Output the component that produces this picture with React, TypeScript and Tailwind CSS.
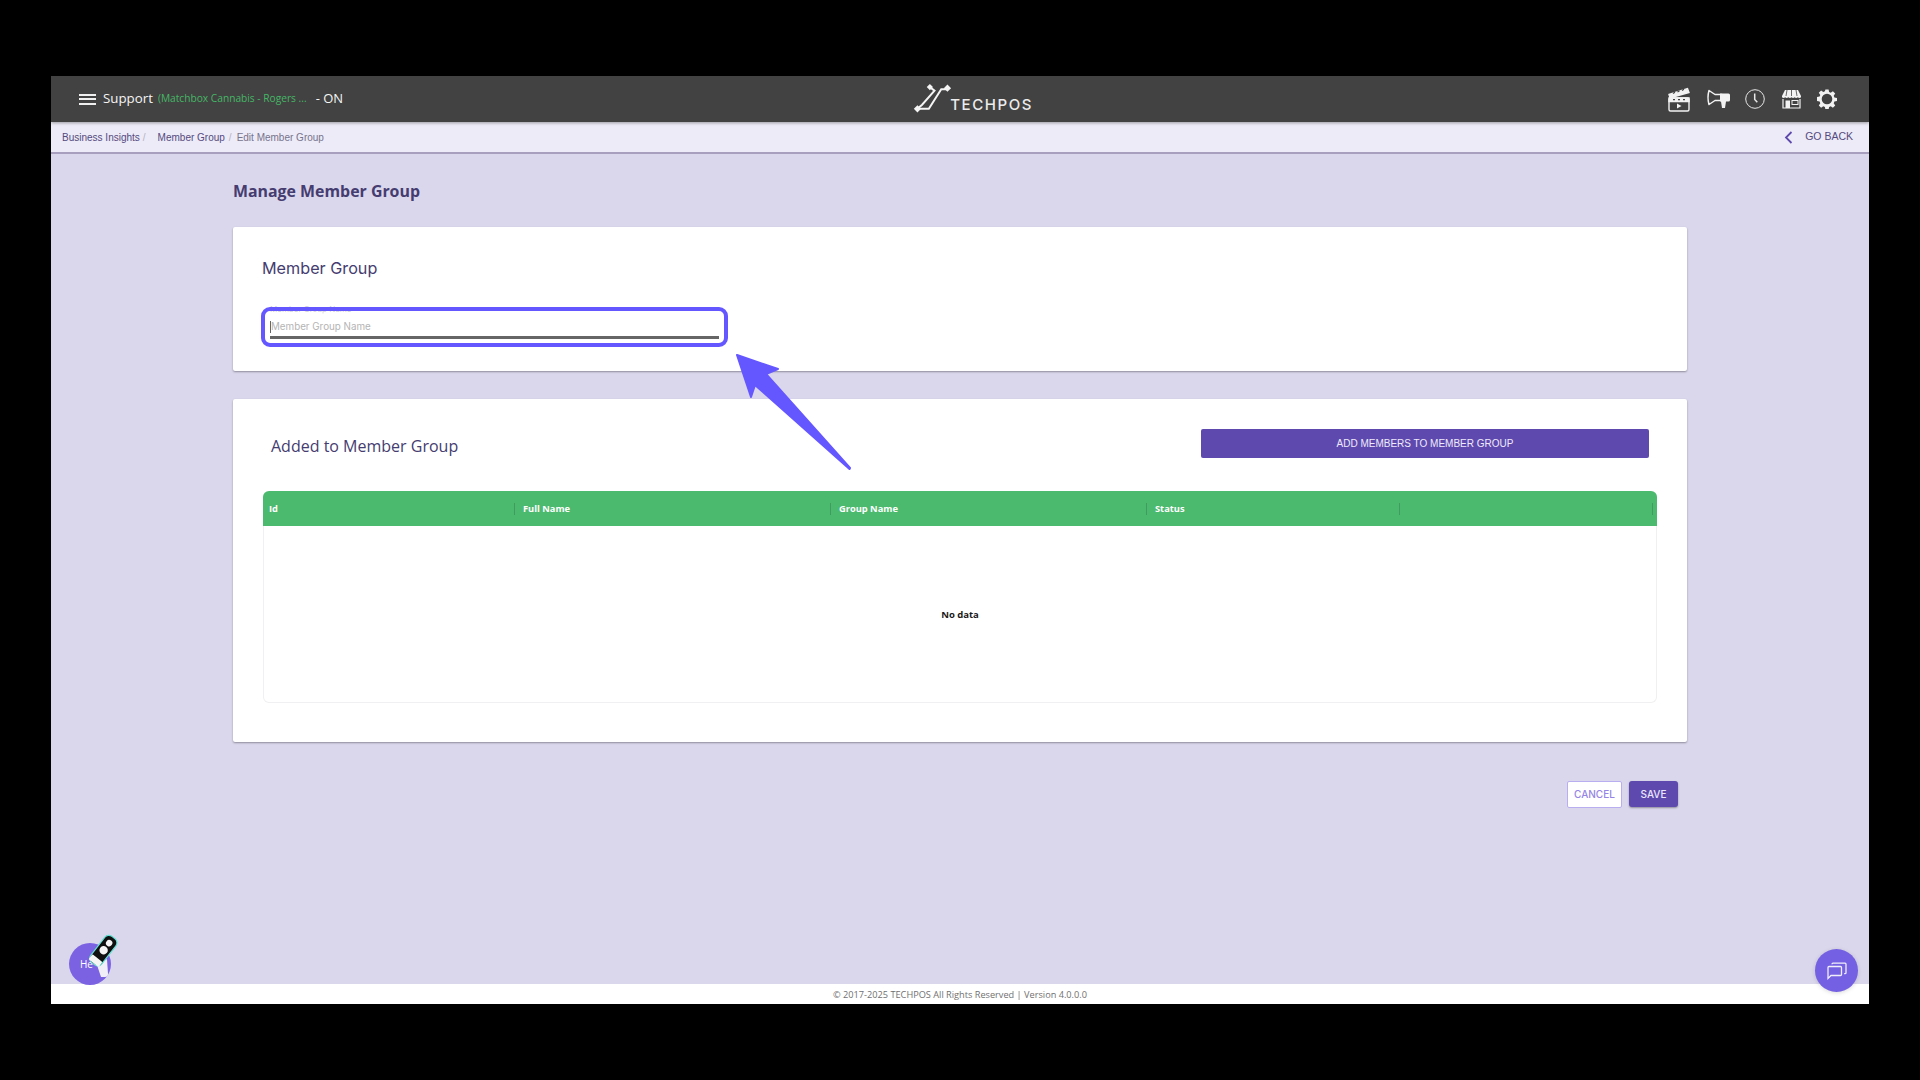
import React from "react";

const Clapper = () => (
  <svg width="24" height="26" viewBox="0 0 24 26" fill="none" stroke="#f2f2f2" strokeWidth="1.4">
    <rect x="2" y="12" width="20" height="13" rx="1.5" />
    <path d="M2 8.5 20.5 2.5 22 6.5 3 12Z" fill="#f2f2f2" />
    <path d="M2 12h20v3.5H2Z" fill="#f2f2f2" />
    <path d="M6 7.5l2-1.2M10.5 6l2-1.2M15 4.5l2-1.2M6 13.7h2M11 13.7h2M16 13.7h2" stroke="#424242" strokeWidth="1.2" />
    <path d="M10 17.5v5l4.5-2.5Z" fill="#f2f2f2" stroke="none" />
  </svg>
);

const Horn = () => (
  <svg width="25" height="20" viewBox="0 0 25 20" fill="none">
    <path d="M3 1.5 9 5.5 H16 V11.5 H9 L3 15.5 Q1 8.5 3 1.5Z" stroke="#f2f2f2" strokeWidth="1.5" strokeLinejoin="round" />
    <path d="M14 4.5h8.5q1.5 0 1.5 1.5V11q0 1.5-1.5 1.5H20l-1 6.5h-3l-1-6.5h-1Z" fill="#f2f2f2" />
  </svg>
);

const ClockIcon = () => (
  <svg width="20" height="20" viewBox="0 0 20 20" fill="none" stroke="#e8e8e8" strokeWidth="1">
    <circle cx="10" cy="10" r="9.3" />
    <path d="M9.7 4.5v6l2.6 2.8" strokeWidth="1.5" />
  </svg>
);

const StoreIcon = () => (
  <svg width="19" height="20" viewBox="0 0 19 20" fill="none">
    <path d="M3 1h13l3 6H0Z" fill="#f2f2f2" />
    <path d="M0 7h19v1.2q-1.6 1.6-3.2 0-1.6 1.6-3.2 0-1.5 1.6-3.1 0-1.6 1.6-3.2 0-1.6 1.6-3.1 0-1.6 1.6-3.2 0Z" fill="#f2f2f2" />
    <path d="M5 1 4 7M9.5 1v6M14 1l1 6" stroke="#424242" strokeWidth=".8" />
    <path d="M1 10v9h17v-9" stroke="#f2f2f2" strokeWidth="1.2" />
    <path d="M3.5 11.5h4.5V19H3.5Z" fill="#f2f2f2" />
    <rect x="10" y="11.5" width="6" height="4" stroke="#f2f2f2" strokeWidth="1" />
  </svg>
);

const GearIcon = () => (
  <svg width="20" height="20" viewBox="0 0 20 20">
    <path
      fill="#f2f2f2"
      fillRule="evenodd"
      d="M8.4.5h3.2l.5 2.6 1.6.7 2.2-1.5 2.3 2.3-1.5 2.2.7 1.6 2.6.5v3.2l-2.6.5-.7 1.6 1.5 2.2-2.3 2.3-2.2-1.5-1.6.7-.5 2.6H8.4l-.5-2.6-1.6-.7-2.2 1.5-2.3-2.3 1.5-2.2-.7-1.6-2.6-.5V8.1l2.6-.5.7-1.6-1.5-2.2 2.3-2.3 2.2 1.5 1.6-.7ZM10 4.7a5.3 5.3 0 1 0 0 10.6 5.3 5.3 0 0 0 0-10.6Z"
    />
  </svg>
);

const LogoMark = () => (
  <svg width="42" height="30" viewBox="0 0 40 29" fill="none" stroke="#f5f5f5" strokeWidth="1.9">
    <path d="M4 24H15L27 5H33" />
    <path d="M16 3l4.5 3.5L8.5 20 4 24" />
    <path d="M4 20.5 7.5 24 4 27.5.5 24Z" fill="#f5f5f5" stroke="none" />
    <path d="M33 .5 36.5 4 33 7.5 29.5 4Z" fill="#f5f5f5" stroke="none" />
    <path d="M16 0l3 3-3 3-3-3Z" fill="#f5f5f5" stroke="none" />
  </svg>
);

const HeadCell = ({ label, className, sep = true }: { label: string; className: string; sep?: boolean }) => (
  <div className={`flex items-center justify-between ${className}`}>
    <span className="font-['Open_Sans',sans-serif] text-[9.3px] font-bold text-white">{label}</span>
    {sep && <span className="h-[12px] w-px bg-[#3f9c5e]" />}
  </div>
);

export default function App() {
  return (
    <div className="h-screen w-screen overflow-hidden bg-black pl-[51px] pt-[76px]">
      <div className="relative flex h-[928px] w-[1818px] flex-col bg-white">
        {/* top bar */}
        <header className="z-10 flex h-[46px] shrink-0 items-center bg-[#424242] pl-[28px] pr-[32px] shadow-[0_1px_3px_rgba(0,0,0,0.35)]">
          <div className="flex flex-col gap-[2.5px]">
            <span className="h-[2px] w-[17px] bg-[#efefef]" />
            <span className="h-[2px] w-[17px] bg-[#efefef]" />
            <span className="h-[2px] w-[17px] bg-[#efefef]" />
          </div>
          <span className="ml-[7px] font-['Open_Sans',sans-serif] text-[13.3px] font-medium text-[#f5f5f5]">Support</span>
          <span className="ml-[5px] font-['Open_Sans',sans-serif] text-[10.2px] text-[#45b665]">(Matchbox Cannabis - Rogers ...</span>
          <span className="ml-[9px] font-['Open_Sans',sans-serif] text-[13px] text-[#f5f5f5]">- ON</span>
          <div className="ml-[570px] flex items-end">
            <LogoMark />
            <span className="-ml-[5px] font-['Inter',sans-serif] text-[15px] font-medium leading-[18px] tracking-[1.6px] text-[#ececec]">TECHPOS</span>
          </div>
          <div className="ml-auto flex items-center">
            <Clapper />
            <span className="ml-[15px]"><Horn /></span>
            <span className="ml-[14px]"><ClockIcon /></span>
            <span className="ml-[17px]"><StoreIcon /></span>
            <span className="ml-[16px]"><GearIcon /></span>
          </div>
        </header>

        {/* breadcrumb */}
        <div className="flex h-[32px] shrink-0 items-center border-b-2 border-[#a89fbf] bg-[#edebf7] pl-[11px] pr-[16px] font-['Liberation_Sans',sans-serif] text-[10px]">
          <span className="text-[#544a80]">Business Insights</span>
          <span className="ml-[3px] text-[#b5b3c4]">/</span>
          <span className="ml-[12px] text-[#544a80]">Member Group</span>
          <span className="ml-[4px] text-[#b5b3c4]">/</span>
          <span className="ml-[5px] text-[#77738c]">Edit Member Group</span>
          <div className="ml-auto flex items-center">
            <svg width="9" height="13" viewBox="0 0 9 13" fill="none" stroke="#5e49ae" strokeWidth="1.8">
              <path d="M7.5 1 2 6.5 7.5 12" />
            </svg>
            <span className="ml-[12px] text-[10.5px] text-[#544a80]">GO BACK</span>
          </div>
        </div>

        {/* main */}
        <main className="flex flex-1 flex-col bg-[#dad7ec] px-[182px]">
          <h1 className="mt-[25px] font-['Open_Sans',sans-serif] text-[15.9px] font-bold leading-[24px] text-[#453c70]">Manage Member Group</h1>

          <section className="mt-[24px] h-[144px] rounded-[2px] bg-white px-[29px] pt-[29px] shadow-[0_1px_2px_rgba(0,0,0,0.35)]">
            <h2 className="font-['Inter',sans-serif] text-[16.2px] leading-[24px] text-[#453c70]">Member Group</h2>
            <div className="relative ml-[8px] mt-[25px] h-[34px] w-[449px]">
              <div className="h-[9px] overflow-hidden font-['Inter',sans-serif] text-[8px] leading-[8px] text-[#cfcfd8]">Member Group Name</div>
              <div className="mt-[7px] border-l border-[#666] font-['Inter',sans-serif] text-[9.8px] leading-[12px] text-[#b4b4b4]">Member Group Name</div>
              <div className="mt-[3px] h-[2.5px] bg-[#666]" />
              <div className="absolute -left-[9px] -right-[9px] top-[2px] h-[40px] rounded-[9px] border-[4.5px] border-[#6557ff]" />
            </div>
          </section>

          <section className="mt-[28px] flex h-[343px] flex-col rounded-[2px] bg-white px-[30px] pt-[30px] shadow-[0_1px_2px_rgba(0,0,0,0.35)]">
            <div className="flex h-[29px] items-center justify-between px-[8px]">
              <h2 className="mt-[5px] font-['Open_Sans',sans-serif] text-[16px] text-[#453c70]">Added to Member Group</h2>
              <button className="flex h-[29px] w-[448px] items-center justify-center rounded-[2px] bg-[#5e49ae] font-['Liberation_Sans',sans-serif] text-[10px] text-[#efeafa]">
                ADD MEMBERS TO MEMBER GROUP
              </button>
            </div>
            <div className="mt-[33px] flex h-[212px] flex-col rounded-[6px] border border-t-0 border-[#f0f0f2]">
              <div className="-mx-px flex h-[35px] shrink-0 rounded-t-[6px] bg-[#4bb96e]">
                <HeadCell label="Id" className="w-[252px] pl-[6px]" />
                <HeadCell label="Full Name" className="w-[316px] pl-[8px]" />
                <HeadCell label="Group Name" className="w-[316px] pl-[8px]" />
                <HeadCell label="Status" className="w-[253px] pl-[8px]" />
                <HeadCell label="" className="w-[253px]" />
              </div>
              <div className="flex flex-1 items-center justify-center pt-[2px]">
                <span className="font-['Open_Sans',sans-serif] text-[9.5px] font-bold text-[#1a1a1a]">No data</span>
              </div>
            </div>
          </section>

          <div className="mt-[39px] flex justify-end gap-[7px] pr-[9px]">
            <button className="flex h-[27px] w-[55px] items-center justify-center rounded-[2px] border border-[#b9aeef] bg-white font-['Inter',sans-serif] text-[10px] font-medium text-[#9484e6]">CANCEL</button>
            <button className="flex h-[26px] w-[49px] items-center justify-center rounded-[3px] bg-[#5e49ae] font-['Inter',sans-serif] text-[10px] font-medium text-[#ebe7fa] shadow-[0_1px_2px_rgba(0,0,0,0.35)]">SAVE</button>
          </div>
        </main>

        {/* footer */}
        <footer className="flex h-[20px] shrink-0 items-center justify-center bg-white pt-[2px] font-['Open_Sans',sans-serif] text-[9.2px] text-[#707070]">
          © 2017-2025 TECHPOS All Rights Reserved | Version 4.0.0.0
        </footer>

        {/* annotation arrow */}
        <svg className="pointer-events-none absolute left-[680px] top-[275px]" width="130" height="125" viewBox="0 0 130 125">
          <path d="M6 4 47 18 35 23 119 117 118.5 118 24 34 20 46Z" fill="#6557ff" stroke="#6557ff" strokeWidth="2" strokeLinejoin="round" />
        </svg>

        {/* help button */}
        <div className="absolute left-[18px] top-[867px] flex h-[42px] w-[42px] items-center rounded-full bg-[#7b62e3] pl-[11px] font-['Open_Sans',sans-serif] text-[10px] text-white">He</div>
        <svg className="absolute left-[33px] top-[856px]" width="38" height="48" viewBox="0 0 38 48">
          <path d="M13 33 23 27 24 42 Q24 45 21 45 H17Z" fill="#f1eef8" />
          <g transform="rotate(38 19 19)">
            <rect x="12" y="2" width="14" height="33" rx="5" fill="#101010" stroke="#5fe0d2" strokeWidth="1.2" />
            <rect x="12.6" y="28" width="12.8" height="6.4" rx="1" fill="#f5f5f5" />
            <circle cx="19" cy="18" r="4.2" fill="#f5f5f5" />
            <circle cx="19" cy="9" r="3.2" fill="#f5f5f5" />
          </g>
        </svg>

        {/* chat button */}
        <div className="absolute left-[1764px] top-[873px] flex h-[43px] w-[43px] items-center justify-center rounded-full bg-[#7460e2] shadow-[0_1px_4px_rgba(0,0,0,0.15)]">
          <svg width="20" height="20" viewBox="0 0 20 20" fill="none" stroke="#f1eefc" strokeWidth="1.3">
            <path d="M1 6.5q0-1 1-1h11.5q1 0 1 1v7q0 1-1 1H4l-3 3Z" />
            <path d="M5 3.2q0-1 1-1h12q1 0 1 1v8.5q0 1-1 1h-.8" />
          </svg>
        </div>
      </div>
    </div>
  );
}
